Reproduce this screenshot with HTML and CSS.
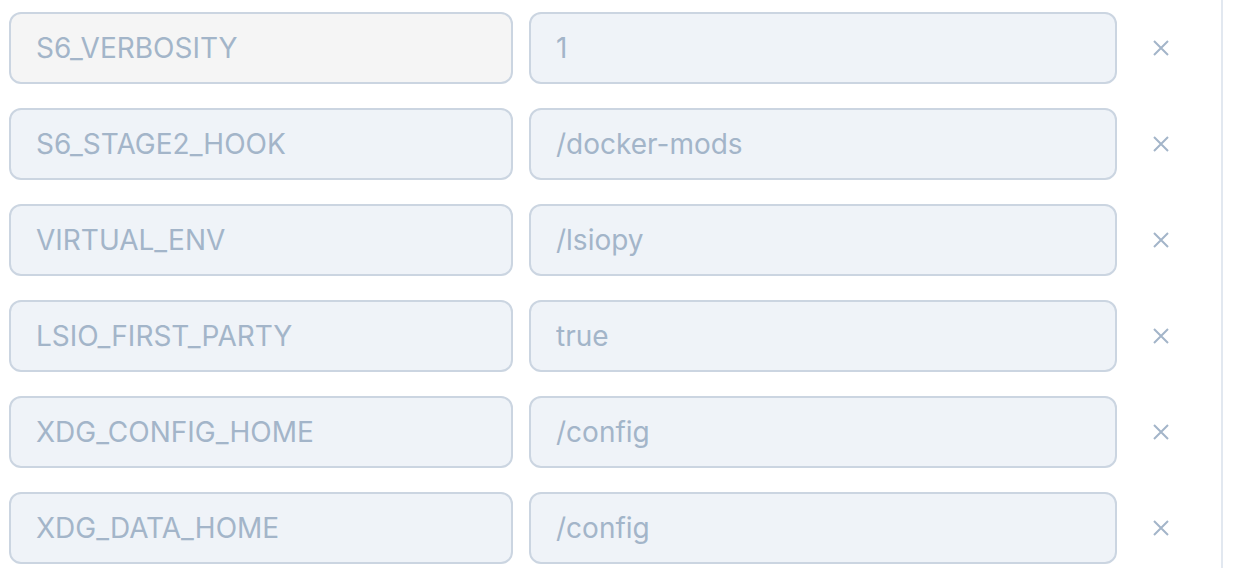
FILE: index.html
```html
<!DOCTYPE html>
<html>
<head>
<meta charset="utf-8">
<link rel="stylesheet" href="styles.css">
</head>
<body>
<div class="panel">
  <div class="env-list">
    <div class="env-row">
      <input class="field field-key field-locked" value="S6_VERBOSITY" readonly>
      <input class="field field-value" value="1">
      <button class="remove" aria-label="Remove"><svg viewBox="0 0 16 16" width="16" height="16"><path d="M1 1L15 15M15 1L1 15" /></svg></button>
    </div>
    <div class="env-row">
      <input class="field field-key" value="S6_STAGE2_HOOK">
      <input class="field field-value" value="/docker-mods">
      <button class="remove" aria-label="Remove"><svg viewBox="0 0 16 16" width="16" height="16"><path d="M1 1L15 15M15 1L1 15" /></svg></button>
    </div>
    <div class="env-row">
      <input class="field field-key" value="VIRTUAL_ENV">
      <input class="field field-value" value="/lsiopy">
      <button class="remove" aria-label="Remove"><svg viewBox="0 0 16 16" width="16" height="16"><path d="M1 1L15 15M15 1L1 15" /></svg></button>
    </div>
    <div class="env-row">
      <input class="field field-key" value="LSIO_FIRST_PARTY">
      <input class="field field-value" value="true">
      <button class="remove" aria-label="Remove"><svg viewBox="0 0 16 16" width="16" height="16"><path d="M1 1L15 15M15 1L1 15" /></svg></button>
    </div>
    <div class="env-row">
      <input class="field field-key" value="XDG_CONFIG_HOME">
      <input class="field field-value" value="/config">
      <button class="remove" aria-label="Remove"><svg viewBox="0 0 16 16" width="16" height="16"><path d="M1 1L15 15M15 1L1 15" /></svg></button>
    </div>
    <div class="env-row">
      <input class="field field-key" value="XDG_DATA_HOME">
      <input class="field field-value" value="/config">
      <button class="remove" aria-label="Remove"><svg viewBox="0 0 16 16" width="16" height="16"><path d="M1 1L15 15M15 1L1 15" /></svg></button>
    </div>
  </div>
</div>
</body>
</html>
```
FILE: styles.css
```css
html, body {
  margin: 0;
  padding: 0;
  background: #ffffff;
  height: 100%;
  overflow: hidden;
}
.panel {
  width: 1223px;
  height: 568px;
  border-right: 2px solid #e2e8f0;
  box-sizing: border-box;
  padding: 12px 0 0 9px;
}
.env-list {
  display: flex;
  flex-direction: column;
  gap: 24px;
}
.env-row {
  display: grid;
  grid-template-columns: 504px 588px 60px;
  column-gap: 16px;
  align-items: center;
}
.field {
  box-sizing: border-box;
  height: 72px;
  width: 100%;
  border: 2px solid #cbd5e1;
  border-radius: 12px;
  background: #eff3f8;
  padding: 0 0 0 25px;
  font-family: Inter, "Noto Sans", sans-serif;
  font-size: 28px;
  color: #a3b5c9;
  outline: none;
}
.field-locked {
  background: #f5f5f5;
}
.remove {
  border: 0;
  background: none;
  padding: 0;
  width: 56px;
  height: 44px;
  display: flex;
  align-items: center;
  justify-content: center;
  justify-self: start;
}
.remove svg {
  stroke: #a3b5c9;
  stroke-width: 2;
  fill: none;
}
```
